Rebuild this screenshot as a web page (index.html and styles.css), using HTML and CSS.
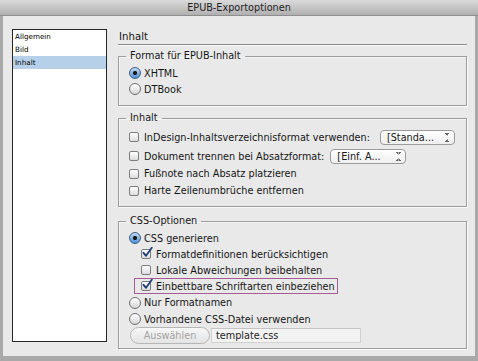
FILE: index.html
```html
<!DOCTYPE html>
<html>
<head>
  <meta charset="utf-8">
  <link rel="stylesheet" href="styles.css">
</head>
<body>
  <div class="window">
    <div class="titlebar">EPUB-Exportoptionen</div>

    <div class="dialog">
      <ul class="sidebar">
        <li>Allgemein</li>
        <li>Bild</li>
        <li class="selected">Inhalt</li>
      </ul>

      <div class="pane">
        <div class="pane-title">Inhalt</div>

        <!-- Format -->
        <fieldset class="group group-format">
          <legend>Format für EPUB-Inhalt</legend>
          <div class="row"><span class="radio on"></span>XHTML</div>
          <div class="row"><span class="radio"></span>DTBook</div>
        </fieldset>

        <!-- Inhalt -->
        <fieldset class="group group-content">
          <legend>Inhalt</legend>
          <div class="row row-toc">
            <span class="check"></span>InDesign-Inhaltsverzeichnisformat verwenden:
            <div class="select select-toc"><span>[Standa...</span><span class="arrows"></span></div>
          </div>
          <div class="row row-split">
            <span class="check"></span>Dokument trennen bei Absatzformat:
            <div class="select select-split"><span>[Einf. A...</span><span class="arrows"></span></div>
          </div>
          <div class="row row-tall"><span class="check"></span>Fußnote nach Absatz platzieren</div>
          <div class="row row-tall"><span class="check"></span>Harte Zeilenumbrüche entfernen</div>
        </fieldset>

        <!-- CSS -->
        <fieldset class="group group-css">
          <legend>CSS-Optionen</legend>
          <div class="row"><span class="radio on"></span>CSS generieren</div>
          <div class="row sub">
            <span class="check checked">
              <svg viewBox="0 0 12 12" width="12" height="12"><path d="M2.5 5.8 L5 8.8 L10.8 0.8" fill="none" stroke="#1c3d78" stroke-width="1.8" stroke-linecap="round" stroke-linejoin="round"/></svg>
            </span>Formatdefinitionen berücksichtigen
          </div>
          <div class="row sub"><span class="check"></span>Lokale Abweichungen beibehalten</div>
          <div class="row highlight">
            <span class="check checked">
              <svg viewBox="0 0 12 12" width="12" height="12"><path d="M2.5 5.8 L5 8.8 L10.8 0.8" fill="none" stroke="#1c3d78" stroke-width="1.8" stroke-linecap="round" stroke-linejoin="round"/></svg>
            </span>Einbettbare Schriftarten einbeziehen
          </div>
          <div class="row row-tall"><span class="radio"></span>Nur Formatnamen</div>
          <div class="row"><span class="radio"></span>Vorhandene CSS-Datei verwenden</div>
          <div class="row row-file">
            <button class="choose" disabled>Auswählen</button>
            <div class="file-field">template.css</div>
          </div>
        </fieldset>
      </div>
    </div>
  </div>
</body>
</html>
```

FILE: styles.css
```css
html, body {
  margin: 0;
  padding: 0;
}

body {
  font-family: "DejaVu Sans", "Liberation Sans", sans-serif;
  font-size: 9.7px;
  color: #151515;
}

.window {
  width: 478px;
  height: 361px;
  background: #a9a9a9;
  display: flex;
  flex-direction: column;
}

.titlebar {
  height: 16px;
  line-height: 16px;
  text-align: center;
  color: #1e1e1e;
  background: linear-gradient(#dadada, #b0b0b0);
  border-bottom: 1px solid #8e8e8e;
  box-sizing: border-box;
}

.dialog {
  flex: 1;
  display: flex;
  gap: 11px;
  margin: 0 3px 5px 3px;
  padding: 13px 8px 0 9px;
  background: #e9e9e9;
}

/* Sidebar list */
.sidebar {
  list-style: none;
  margin: 0;
  padding: 0;
  width: 95px;
  height: 313px;
  box-sizing: border-box;
  background: #fff;
  border: 1px solid #262626;
  font-size: 7.2px;
  color: #000;
}

.sidebar li {
  height: 13px;
  line-height: 13px;
  padding-left: 2px;
}

.sidebar li.selected {
  background: #b7d0ea;
}

/* Right pane */
.pane {
  width: 349px;
  display: flex;
  flex-direction: column;
}

.pane-title {
  height: 15px;
  line-height: 15px;
  padding-left: 1px;
  font-size: 10.2px;
  border-bottom: 1px solid #8a8a8a;
  box-shadow: 0 1px 0 #fafafa;
}

.group {
  margin: 0;
  min-width: 0;
  padding: 2px 8px 8px 10px;
  border: 1px solid #9d9d9d;
  box-shadow: 1px 1px 0 #fbfbfb, inset 1px 1px 0 #f4f4f4;
}

.group legend {
  line-height: 14px;
  padding: 0 4px;
  margin-left: -3px;
}

.group-format {
  margin-top: 4px;
}

.group-content {
  margin-top: 5px;
  padding-bottom: 7px;
}

.group-css {
  margin-top: 7px;
  padding-bottom: 4px;
}

.row {
  display: flex;
  align-items: center;
  height: 16px;
  gap: 3px;
  white-space: nowrap;
}

.row-toc {
  height: 20px;
}

.row-split {
  height: 18px;
}

.row-tall {
  height: 17px;
}

.sub {
  margin-left: 12px;
}

.highlight {
  width: 204px;
  box-sizing: border-box;
  margin-left: 5px;
  padding-left: 6px;
  border: 1px solid #a65d97;
}

/* Radio buttons */
.radio {
  width: 12px;
  height: 12px;
  box-sizing: border-box;
  border-radius: 50%;
  border: 1px solid #707070;
  background: linear-gradient(#ffffff, #d6d6d6);
  flex-shrink: 0;
}

.radio.on {
  border-color: #3b5f8e;
  background:
    radial-gradient(circle, #1b1b1b 0, #1b1b1b 1.8px, transparent 2.4px),
    linear-gradient(#c2dcf5, #4f90d6);
}

/* Checkboxes */
.check {
  position: relative;
  width: 10px;
  height: 10px;
  box-sizing: border-box;
  border: 1px solid #7c7c7c;
  border-radius: 2px;
  background: linear-gradient(#ffffff, #dcdcdc);
  margin-right: 2px;
  flex-shrink: 0;
}

.check svg {
  position: absolute;
  left: -1px;
  top: -3px;
}

/* Popup menus */
.select {
  display: flex;
  align-items: center;
  justify-content: space-between;
  height: 15px;
  box-sizing: border-box;
  padding: 0 4px 0 6px;
  border: 1px solid #9b9b9b;
  border-radius: 4px;
  background: linear-gradient(#ffffff, #eeeeee);
  color: #1a1a1a;
}

.select-toc {
  width: 75px;
  margin-left: 7px;
}

.select-split {
  width: 76px;
  margin-left: 3px;
}

.arrows {
  width: 5px;
  height: 9px;
  background:
    linear-gradient(to top right, transparent 50%, #666 50%) 0 0 / 2.5px 3px no-repeat,
    linear-gradient(to top left, transparent 50%, #666 50%) 2.5px 0 / 2.5px 3px no-repeat,
    linear-gradient(to bottom right, transparent 50%, #666 50%) 0 6px / 2.5px 3px no-repeat,
    linear-gradient(to bottom left, transparent 50%, #666 50%) 2.5px 6px / 2.5px 3px no-repeat;
}

/* File chooser */
.row-file {
  height: 17px;
  gap: 0;
}

.choose {
  height: 17px;
  width: 80px;
  margin: 0 0 0 1px;
  padding: 0;
  font-family: inherit;
  font-size: 9.7px;
  color: #a3a3a3;
  border: 1px solid #b6b6b6;
  border-radius: 9px;
  background: linear-gradient(#f7f7f7, #e4e4e4);
}

.file-field {
  width: 150px;
  height: 15px;
  line-height: 13px;
  box-sizing: border-box;
  margin-left: 1px;
  padding-left: 4px;
  background: #f3f3f3;
  border: 1px solid #d2d2d2;
  border-top-color: #c4c4c4;
  color: #222;
}
```
